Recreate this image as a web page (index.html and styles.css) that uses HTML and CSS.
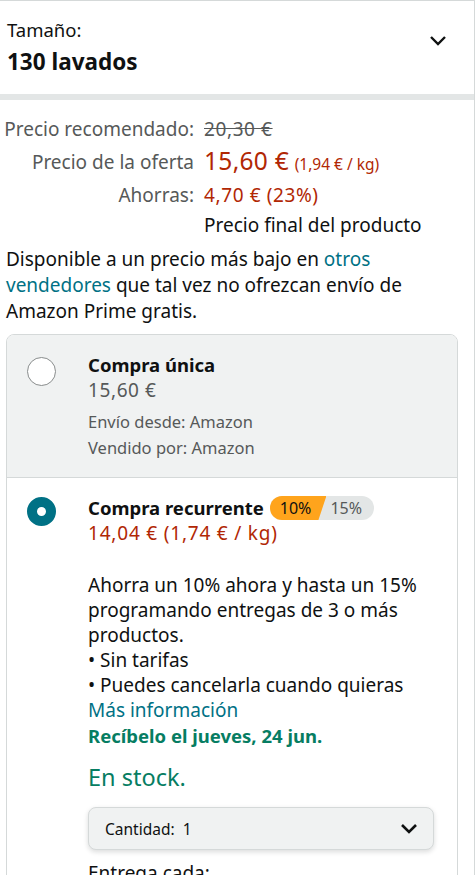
FILE: index.html
```html
<!DOCTYPE html>
<html lang="es">
<head>
<meta charset="utf-8">
<link rel="stylesheet" href="styles.css">
</head>
<body>
<div class="page">
  <div class="size-row">
    <div class="size-text">
      <div class="size-label">Tamaño:</div>
      <div class="size-value">130 lavados</div>
    </div>
    <svg class="chev" width="18" height="12" viewBox="0 0 18 12"><path d="M2 2 L9 9 L16 2" fill="none" stroke="#0f1111" stroke-width="2.4"/></svg>
  </div>
  <div class="band"></div>

  <div class="prices">
    <div class="plabel">Precio recomendado:</div>
    <div class="pval num"><span class="strike">20,30 €</span></div>
    <div class="plabel">Precio de la oferta</div>
    <div class="pval red num"><span class="big">15,60 €</span> <span class="unit">(1,94 € / kg)</span></div>
    <div class="plabel">Ahorras:</div>
    <div class="pval red num">4,70 € (23%)</div>
    <div class="plabel"></div>
    <div class="pval dark">Precio final del producto</div>
  </div>

  <p class="avail">Disponible a un precio más bajo en <a class="link">otros vendedores</a> que tal vez no ofrezcan envío de Amazon Prime gratis.</p>

  <div class="card">
    <div class="opt opt-off">
      <div class="radio"></div>
      <div class="opt-body">
        <div class="opt-title">Compra única</div>
        <div class="opt-price num">15,60 €</div>
        <div class="small">Envío desde: Amazon</div>
        <div class="small">Vendido por: Amazon</div>
      </div>
    </div>
    <div class="opt opt-on">
      <div class="radio on"></div>
      <div class="opt-body">
        <div class="opt-title">Compra recurrente <span class="badge"><span class="b1">10%</span><span class="b2">15%</span></span></div>
        <div class="opt-price red num">14,04 € (1,74 € / kg)</div>
        <div class="desc">
          Ahorra un 10% ahora y hasta un 15% programando entregas de 3 o más productos.<br>
          • Sin tarifas<br>
          • Puedes cancelarla cuando quieras
        </div>
        <div class="link">Más información</div>
        <div class="deliver">Recíbelo el jueves, 24 jun.</div>
        <div class="stock">En stock.</div>
        <div class="qty">
          <span>Cantidad:&nbsp; 1</span>
          <svg width="18" height="12" viewBox="0 0 18 12"><path d="M2 2 L9 9 L16 2" fill="none" stroke="#0f1111" stroke-width="2.6"/></svg>
        </div>
        <div class="every">Entrega cada:</div>
      </div>
    </div>
  </div>
</div>
</body>
</html>
```

FILE: styles.css
```css
* { box-sizing: border-box; }
html, body { margin: 0; padding: 0; background: #fff; }
body {
  font-family: "Noto Sans", Roboto, sans-serif;
  color: #0f1111;
  width: 475px;
  height: 875px;
  overflow: hidden;
}
.page {
  width: 475px;
  border-top: 1px solid #d5d9d9;
  border-right: 1px solid #d5d9d9;
  min-height: 875px;
}
.size-row {
  display: flex;
  align-items: center;
  justify-content: space-between;
  padding: 15px 27px 16px 7px;
  height: 93px;
}
.size-label { font-size: 18.5px; line-height: 26px; }
.size-value { font-size: 22.5px; font-weight: 700; line-height: 32px; margin-top: 3px; }
.chev { margin-top: -12px; }
.band { height: 6px; background: #e3e6e6; }
.prices {
  display: grid;
  grid-template-columns: 194px auto;
  column-gap: 10px;
  padding: 14px 0 0 0;
  align-items: center;
}
.plabel { text-align: right; font-size: 19px; color: #565959; line-height: 31px; white-space: nowrap; }
.pval { font-size: 19px; line-height: 31px; white-space: nowrap; }
.num { letter-spacing: 0.6px; }
.strike { text-decoration: line-through; color: #565959; }
.red { color: #b12704; }
.big { font-size: 24.5px; letter-spacing: 0.3px; }
.unit { font-size: 15.5px; letter-spacing: 0; }
.dark { color: #0f1111; line-height: 28px; }
.avail {
  margin: 7px 0 0;
  padding: 0 6px;
  font-size: 19px;
  line-height: 26px;
}
.link { color: #007185; text-decoration: none; }
.card {
  margin: 10px 16px 0 6px;
  border: 1px solid #d5d9d9;
  border-radius: 8px 8px 0 0;
  overflow: hidden;
}
.opt {
  display: flex;
  padding: 17px 0 14px 20px;
}
.opt-off { background: #f0f2f2; border-bottom: 1px solid #d5d9d9; height: 143px; }
.opt-on { background: #fff; padding-top: 17px; }
.radio {
  width: 29px;
  height: 29px;
  border-radius: 50%;
  border: 1.5px solid #888c8c;
  background: #fff;
  flex: none;
  margin-top: 5px;
}
.radio.on { border: 10px solid #007185; margin-top: 2px; }
.opt-body { margin-left: 32px; flex: 1; }
.opt-title { font-size: 18.5px; font-weight: 700; line-height: 26px; display: flex; align-items: center; }
.opt-price { font-size: 19px; line-height: 25px; color: #565959; }
.opt-price.red { color: #b12704; letter-spacing: 0.8px; }
.opt-off .opt-price { margin-bottom: 6px; }
.small { font-size: 16.5px; line-height: 26px; color: #565959; }
.badge {
  display: inline-flex;
  margin-left: 6px;
  font-weight: 400;
  font-size: 16px;
  line-height: 24px;
  border-radius: 12px;
  overflow: hidden;
  background: #e3e6e6;
}
.b1 {
  background: #ffa41c;
  padding: 0 15px 0 10px;
  clip-path: polygon(0 0, 100% 0, calc(100% - 8px) 100%, 0 100%);
  margin-right: -6px;
}
.b2 { padding: 0 12px 0 10px; color: #565959; }
.desc { font-size: 19px; line-height: 25px; margin-top: 27px; }
.opt-on .link { font-size: 19px; line-height: 25px; }
.deliver { font-size: 18.5px; font-weight: 700; color: #067d62; line-height: 25px; }
.stock { font-size: 23.5px; color: #067d62; line-height: 30px; margin-top: 14px; }
.qty {
  margin: 15px 23px 0 0;
  height: 43px;
  border: 1px solid #d5d9d9;
  border-radius: 8px;
  background: #f0f2f2;
  box-shadow: 0 2px 5px rgba(15,17,17,0.15);
  display: flex;
  align-items: center;
  justify-content: space-between;
  padding: 0 15px 0 16px;
  font-size: 15.5px;
}
.every { font-size: 19px; margin-top: 10px; }
```
